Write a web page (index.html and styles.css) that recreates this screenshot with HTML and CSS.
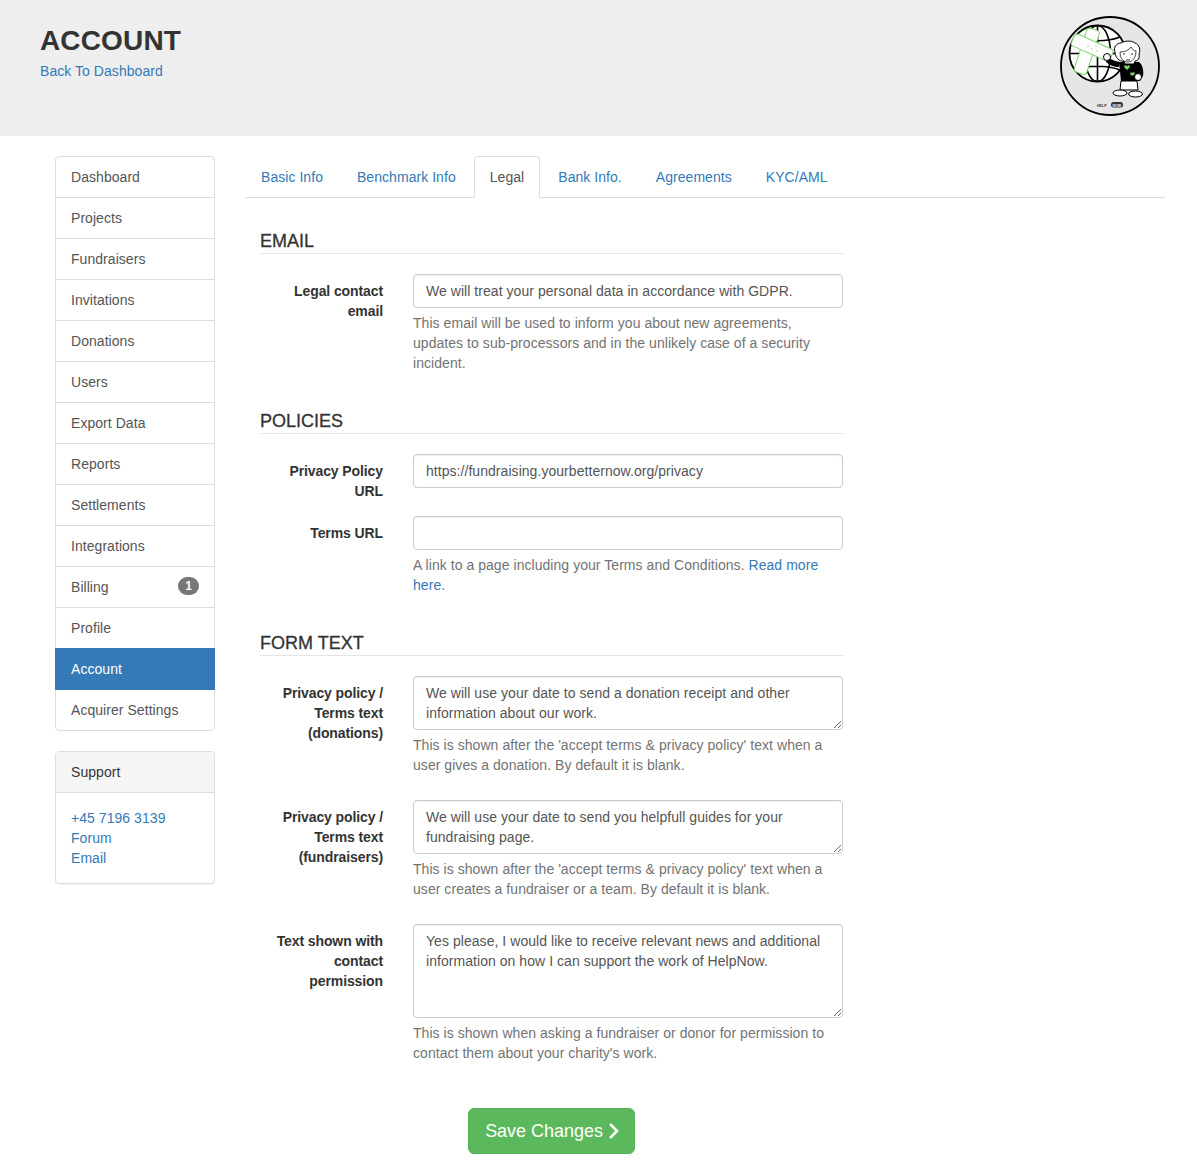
FILE: index.html
```html
<!DOCTYPE html>
<html lang="en">
<head>
    <meta charset="UTF-8">
    <meta name="viewport" content="width=device-width, initial-scale=1.0">
    <title>Account</title>
    <link rel="stylesheet" href="styles.css">
</head>
<body>
    <header class="page-header">
        <div>
            <h1>ACCOUNT</h1>
            <a href="#">Back To Dashboard</a>
        </div>
        <svg class="logo" width="100" height="100" viewBox="0 0 100 100">
            <circle cx="50" cy="50" r="49" fill="#e6e6e6" stroke="#000" stroke-width="1.8"/>
            <!-- globe -->
            <g fill="none" stroke="#000" stroke-width="1.6">
                <circle cx="37.5" cy="37.5" r="28" fill="#fff" stroke-width="1.8"/>
                <ellipse cx="37.5" cy="37.5" rx="13" ry="28"/>
                <path d="M37.5 9.500v56M10 37.5h55M15 21c12 5 33 5 45 0M15 54c12-5 33-5 45 0"/>
            </g>
            <!-- plaster -->
            <g fill="#fff" stroke="#7ed36f" stroke-width="1">
                <rect x="9" y="25" width="46" height="13" rx="3" transform="rotate(-72 32 37)"/>
                <rect x="11" y="25" width="42" height="13" rx="3" transform="rotate(24 32 32)"/>
            </g>
            <g fill="#7ed36f">
                <circle cx="28" cy="30" r="0.7"/><circle cx="32" cy="33" r="0.7"/><circle cx="36" cy="30" r="0.7"/><circle cx="37" cy="35" r="0.7"/>
            </g>
            <!-- person -->
            <path d="M48 42c4 2 8 3 12 4l-1 5c-5 0-10-2-13-5z" fill="#000"/>
            <circle cx="47" cy="41" r="3.500" fill="#fff" stroke="#000"/>
            <path d="M59 46h20c3 2 5 8 4 14l-3 5H61z" fill="#000"/>
            <circle cx="78" cy="61" r="3.500" fill="#fff" stroke="#000"/>
            <path d="M61 65h16l1 9H60z" fill="#fff" stroke="#000"/>
            <ellipse cx="60" cy="77" rx="7" ry="3" fill="#fff" stroke="#000"/>
            <ellipse cx="75.500" cy="78" rx="7" ry="3" fill="#fff" stroke="#000"/>
            <path d="M55 36c-2-5 2-9 6-9 3-2 10-3 14 0 4 1 6 7 4 11 1 4-1 7-4 7l-1 3h-9l-1-3c-5 1-9-4-9-9z" fill="#fff" stroke="#000"/>
            <path d="M60 36c5 0 9-2 11-5 1 2 3 4 5 4 0 6-3 11-8 11s-8-4-8-10z" fill="#fff" stroke="#000" stroke-width="0.7"/>
            <path d="M63 38h2M71 38h2M66 44h4" stroke="#000" stroke-width="0.8"/>
            <path d="M67 54l-3-3 1-2 2 1 2-1 1 2zM72 60l-2-2 1-2 1 1 2-1 1 2z" fill="#7ed36f"/>
            <rect x="51" y="86" width="12" height="5.500" rx="2.500" fill="#333"/>
            <text class="logo-text" x="37" y="90.500">HELP</text>
            <text class="logo-text logo-text-now" x="52.500" y="90.500">NOW</text>
        </svg>
    </header>

    <div class="layout">
        <aside class="sidebar">
            <nav class="side-list">
                <a href="#">Dashboard</a>
                <a href="#">Projects</a>
                <a href="#">Fundraisers</a>
                <a href="#">Invitations</a>
                <a href="#">Donations</a>
                <a href="#">Users</a>
                <a href="#">Export Data</a>
                <a href="#">Reports</a>
                <a href="#">Settlements</a>
                <a href="#">Integrations</a>
                <a href="#" class="has-badge">Billing <span class="badge">1</span></a>
                <a href="#">Profile</a>
                <a href="#" class="active">Account</a>
                <a href="#">Acquirer Settings</a>
            </nav>

            <div class="panel">
                <div class="panel-heading">Support</div>
                <div class="panel-body">
                    <a href="#">+45 7196 3139</a>
                    <a href="#">Forum</a>
                    <a href="#">Email</a>
                </div>
            </div>
        </aside>

        <main class="main">
            <ul class="tabs">
                <li><a href="#">Basic Info</a></li>
                <li><a href="#">Benchmark Info</a></li>
                <li class="active"><a href="#">Legal</a></li>
                <li><a href="#">Bank Info.</a></li>
                <li><a href="#">Agreements</a></li>
                <li><a href="#">KYC/AML</a></li>
            </ul>

            <form class="legal-form">
                <h2 class="legend">EMAIL</h2>
                <div class="form-group">
                    <label>Legal contact email</label>
                    <div class="field">
                        <input type="text" value="We will treat your personal data in accordance with GDPR.">
                        <p class="help">This email will be used to inform you about new agreements, updates to sub-processors and in the unlikely case of a security incident.</p>
                    </div>
                </div>

                <h2 class="legend">POLICIES</h2>
                <div class="form-group">
                    <label>Privacy Policy URL</label>
                    <div class="field">
                        <input type="text" value="https://fundraising.yourbetternow.org/privacy">
                    </div>
                </div>
                <div class="form-group">
                    <label>Terms URL</label>
                    <div class="field">
                        <input type="text">
                        <p class="help">A link to a page including your Terms and Conditions. <a href="#">Read more here.</a></p>
                    </div>
                </div>

                <h2 class="legend">FORM TEXT</h2>
                <div class="form-group">
                    <label>Privacy policy / Terms text (donations)</label>
                    <div class="field">
                        <textarea rows="2">We will use your date to send a donation receipt and other information about our work.</textarea>
                        <p class="help">This is shown after the 'accept terms &amp; privacy policy' text when a user gives a donation. By default it is blank.</p>
                    </div>
                </div>
                <div class="form-group">
                    <label>Privacy policy / Terms text (fundraisers)</label>
                    <div class="field">
                        <textarea rows="2">We will use your date to send you helpfull guides for your fundraising page.</textarea>
                        <p class="help">This is shown after the 'accept terms &amp; privacy policy' text when a user creates a fundraiser or a team. By default it is blank.</p>
                    </div>
                </div>
                <div class="form-group">
                    <label>Text shown with contact permission</label>
                    <div class="field">
                        <textarea rows="4">Yes please, I would like to receive relevant news and additional information on how I can support the work of HelpNow.</textarea>
                        <p class="help">This is shown when asking a fundraiser or donor for permission to contact them about your charity's work.</p>
                    </div>
                </div>

                <div class="form-actions">
                    <button type="button" class="save-btn">Save Changes
                        <svg width="11" height="18" viewBox="0 0 11 18"><path d="M2 2l7 7-7 7" fill="none" stroke="#fff" stroke-width="2.600"/></svg>
                    </button>
                </div>
            </form>
        </main>
    </div>
</body>
</html>
```

FILE: styles.css
```css
* {
    box-sizing: border-box;
}

body {
    font-family: "Liberation Sans", Arial, sans-serif;
    font-size: 14px;
    line-height: 20px;
    letter-spacing: 0.05px;
    margin: 0;
    padding: 0;
    color: #333;
    background-color: #fff;
}

a {
    color: #337ab7;
    text-decoration: none;
}

.page-header {
    display: flex;
    justify-content: space-between;
    align-items: flex-start;
    height: 136px;
    padding: 16px 37px 0 40px;
    background-color: #eee;
}

.page-header h1 {
    margin: 9px 0 4px;
    font-size: 28px;
    line-height: 32px;
    font-weight: bold;
    letter-spacing: 0.15px;
}

.logo-text {
    font-size: 3.500px;
    font-weight: bold;
    fill: #333;
}

.logo-text-now {
    fill: #fff;
}

.layout {
    display: flex;
    gap: 30px;
    padding: 20px 32px 12px 55px;
}

.sidebar {
    flex: 0 0 160px;
}

.side-list {
    display: flex;
    flex-direction: column;
    margin-bottom: 20px;
}

.side-list a {
    display: flex;
    justify-content: space-between;
    align-items: center;
    padding: 10px 15px;
    margin-bottom: -1px;
    color: #555;
    background-color: #fff;
    border: 1px solid #ddd;
}

.side-list a:first-child {
    border-radius: 4px 4px 0 0;
}

.side-list a:last-child {
    margin-bottom: 0;
    border-radius: 0 0 4px 4px;
}

.side-list a.active {
    position: relative;
    color: #fff;
    background-color: #337ab7;
    border-color: #337ab7;
}

.badge {
    min-width: 21px;
    padding: 3px 7px;
    margin-top: -2px;
    font-size: 12px;
    font-weight: bold;
    line-height: 12px;
    color: #fff;
    text-align: center;
    background-color: #777;
    border-radius: 10px;
}

.panel {
    background-color: #fff;
    border: 1px solid #ddd;
    border-radius: 4px;
    box-shadow: 0 1px 1px rgba(0, 0, 0, 0.05);
}

.panel-heading {
    padding: 10px 15px;
    background-color: #f5f5f5;
    border-bottom: 1px solid #ddd;
    border-radius: 3px 3px 0 0;
}

.panel-body {
    padding: 15px;
}

.panel-body a {
    display: block;
}

.main {
    flex: 1;
    min-width: 0;
}

.tabs {
    display: flex;
    margin: 0 0 20px;
    padding: 0;
    list-style: none;
    border-bottom: 1px solid #ddd;
}

.tabs li {
    margin-bottom: -1px;
    margin-right: 2px;
}

.tabs a {
    display: block;
    padding: 10px 15px;
    border: 1px solid transparent;
    border-radius: 4px 4px 0 0;
}

.tabs .active a {
    color: #555;
    background-color: #fff;
    border-color: #ddd #ddd #fff;
}

.legal-form {
    width: 583px;
    margin-left: 15px;
}

.legend {
    margin: 0 0 20px;
    height: 36px;
    padding-top: 13px;
    font-size: 18px;
    line-height: 20px;
    font-weight: normal;
    letter-spacing: 0;
    -webkit-text-stroke: 0.3px #333;
    border-bottom: 1px solid #e5e5e5;
}

.form-group {
    display: flex;
    gap: 30px;
    margin-bottom: 15px;
}

.form-group label {
    flex: 0 0 123px;
    padding-top: 7px;
    font-weight: bold;
    letter-spacing: -0.1px;
    text-align: right;
}

.field {
    flex: 1;
    min-width: 0;
}

.field input,
.field textarea {
    display: block;
    width: 100%;
    padding: 6px 12px;
    font-family: inherit;
    font-size: 14px;
    line-height: 20px;
    letter-spacing: inherit;
    color: #555;
    background-color: #fff;
    border: 1px solid #ccc;
    border-radius: 4px;
    box-shadow: inset 0 1px 1px rgba(0, 0, 0, 0.075);
}

.field input {
    height: 34px;
}

.help {
    margin: 5px 0 10px;
    color: #737373;
}

.form-actions {
    display: flex;
    justify-content: center;
    margin-top: 35px;
}

.save-btn {
    display: inline-flex;
    align-items: center;
    gap: 5px;
    height: 46px;
    padding: 10px 15px 10px 16px;
    font-family: inherit;
    font-size: 18px;
    line-height: 24px;
    letter-spacing: -0.03px;
    color: #fff;
    background-color: #5cb85c;
    border: 1px solid #55b355;
    border-radius: 6px;
    cursor: pointer;
}
```
